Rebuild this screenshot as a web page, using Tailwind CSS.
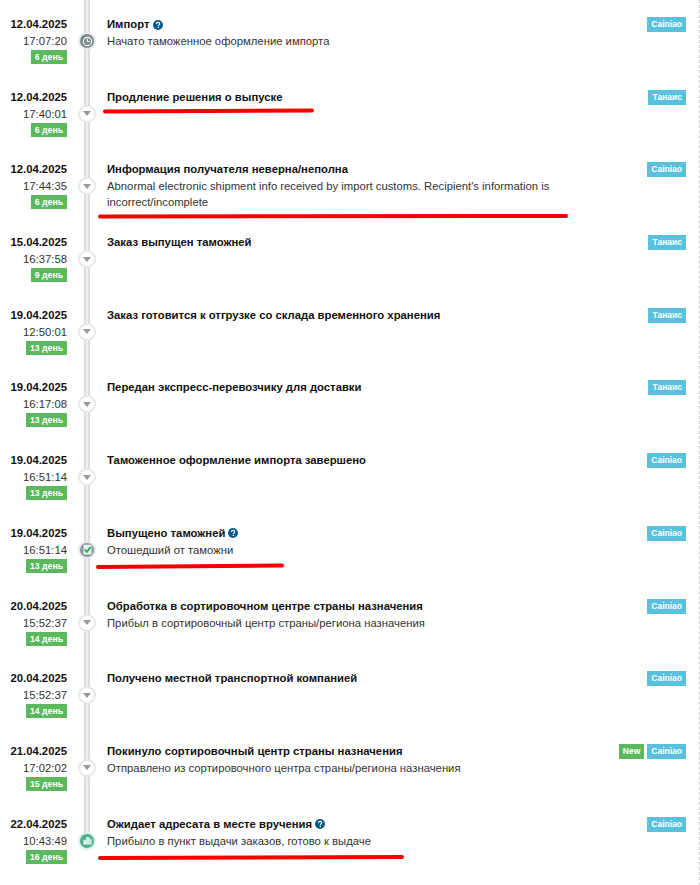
<!DOCTYPE html>
<html lang="en">
<head>
<meta charset="UTF-8">
<title>Tracking</title>
<script src="https://cdn.jsdelivr.net/npm/@tailwindcss/browser@4"></script>
</head>
<body class="bg-white">
<div class="relative w-[700px] h-[885px] overflow-hidden font-['Liberation_Sans',Arial,sans-serif] text-[11.3px] leading-[16px] text-[#333] border-r border-dashed border-[#ccc]">

  <!-- timeline rail -->
  <div class="absolute left-[84px] top-0 w-[6px] h-[840px] bg-[#eef0f2] border-x-2 border-x-[#d9dce0]"></div>

  <div class="pt-[16px]">

    <div class="flex h-[72.7px]">
      <div class="w-[67px] shrink-0 flex flex-col items-end">
        <div class="font-bold leading-[17px] text-[#111]">12.04.2025</div>
        <div>17:07:20</div>
        <div class="mt-[1px] h-[14px] px-[4px] bg-[#5cb85c] text-white font-bold text-[8.7px] leading-[14px]">6 день</div>
      </div>
      <div class="relative w-[40px] shrink-0">
        <div class="absolute left-[13px] top-[18px] w-[14px] h-[14px] rounded-full bg-[#7f8c8d] ring-2 ring-[#e6e8ea] flex items-center justify-center">
          <svg viewBox="0 0 16 16" class="w-[11px] h-[11px]" fill="none" stroke="#fff" stroke-width="1.5"><circle cx="8" cy="8" r="6"/><path d="M8 4.5V8h3"/></svg>
        </div>
      </div>
      <div class="flex-1 min-w-0">
        <div class="font-bold leading-[17px] text-[#111] flex items-center gap-[3px]">Импорт
          <svg viewBox="0 0 16 16" class="w-[10px] h-[10px]"><circle cx="8" cy="8" r="8" fill="#0b5a8f"/><path d="M5.4 6.2C5.5 4.6 6.6 3.8 8.1 3.8c1.5 0 2.6.9 2.6 2.2 0 1.9-2.1 1.9-2.1 3.6" fill="none" stroke="#fff" stroke-width="1.8"/><rect x="7.5" y="10.8" width="2.1" height="2" fill="#fff"/></svg>
        </div>
        <div>Начато таможенное оформление импорта</div>
      </div>
      <div class="w-[100px] shrink-0 pt-[1px] pr-[13px] flex justify-end items-start gap-[3px]"><span class="h-[15px] px-[4px] bg-[#5bc0de] text-white font-bold text-[8.5px] leading-[15px]">Cainiao</span></div>
    </div>

    <div class="flex h-[72.7px]">
      <div class="w-[67px] shrink-0 flex flex-col items-end">
        <div class="font-bold leading-[17px] text-[#111]">12.04.2025</div>
        <div>17:40:01</div>
        <div class="mt-[1px] h-[14px] px-[4px] bg-[#5cb85c] text-white font-bold text-[8.7px] leading-[14px]">6 день</div>
      </div>
      <div class="relative w-[40px] shrink-0">
        <div class="absolute left-[13px] top-[18px] w-[14px] h-[14px] rounded-full bg-white ring-2 ring-[#e6e8ea] flex items-center justify-center">
          <div class="w-0 h-0 border-x-[4px] border-x-transparent border-t-[5px] border-t-[#999]"></div>
        </div>
      </div>
      <div class="flex-1 min-w-0"><div class="font-bold leading-[17px] text-[#111]">Продление решения о выпуске</div></div>
      <div class="w-[100px] shrink-0 pt-[1px] pr-[13px] flex justify-end items-start gap-[3px]"><span class="h-[15px] px-[4px] bg-[#5bc0de] text-white font-bold text-[8.5px] leading-[15px]">Танаис</span></div>
    </div>

    <div class="flex h-[72.7px]">
      <div class="w-[67px] shrink-0 flex flex-col items-end">
        <div class="font-bold leading-[17px] text-[#111]">12.04.2025</div>
        <div>17:44:35</div>
        <div class="mt-[1px] h-[14px] px-[4px] bg-[#5cb85c] text-white font-bold text-[8.7px] leading-[14px]">6 день</div>
      </div>
      <div class="relative w-[40px] shrink-0">
        <div class="absolute left-[13px] top-[18px] w-[14px] h-[14px] rounded-full bg-white ring-2 ring-[#e6e8ea] flex items-center justify-center">
          <div class="w-0 h-0 border-x-[4px] border-x-transparent border-t-[5px] border-t-[#999]"></div>
        </div>
      </div>
      <div class="flex-1 min-w-0">
        <div class="font-bold leading-[17px] text-[#111]">Информация получателя неверна/неполна</div>
        <div>Abnormal electronic shipment info received by import customs. Recipient's information is incorrect/incomplete</div>
      </div>
      <div class="w-[100px] shrink-0 pt-[1px] pr-[13px] flex justify-end items-start gap-[3px]"><span class="h-[15px] px-[4px] bg-[#5bc0de] text-white font-bold text-[8.5px] leading-[15px]">Cainiao</span></div>
    </div>

    <div class="flex h-[72.7px]">
      <div class="w-[67px] shrink-0 flex flex-col items-end">
        <div class="font-bold leading-[17px] text-[#111]">15.04.2025</div>
        <div>16:37:58</div>
        <div class="mt-[1px] h-[14px] px-[4px] bg-[#5cb85c] text-white font-bold text-[8.7px] leading-[14px]">9 день</div>
      </div>
      <div class="relative w-[40px] shrink-0">
        <div class="absolute left-[13px] top-[18px] w-[14px] h-[14px] rounded-full bg-white ring-2 ring-[#e6e8ea] flex items-center justify-center">
          <div class="w-0 h-0 border-x-[4px] border-x-transparent border-t-[5px] border-t-[#999]"></div>
        </div>
      </div>
      <div class="flex-1 min-w-0"><div class="font-bold leading-[17px] text-[#111]">Заказ выпущен таможней</div></div>
      <div class="w-[100px] shrink-0 pt-[1px] pr-[13px] flex justify-end items-start gap-[3px]"><span class="h-[15px] px-[4px] bg-[#5bc0de] text-white font-bold text-[8.5px] leading-[15px]">Танаис</span></div>
    </div>

    <div class="flex h-[72.7px]">
      <div class="w-[67px] shrink-0 flex flex-col items-end">
        <div class="font-bold leading-[17px] text-[#111]">19.04.2025</div>
        <div>12:50:01</div>
        <div class="mt-[1px] h-[14px] px-[4px] bg-[#5cb85c] text-white font-bold text-[8.7px] leading-[14px]">13 день</div>
      </div>
      <div class="relative w-[40px] shrink-0">
        <div class="absolute left-[13px] top-[18px] w-[14px] h-[14px] rounded-full bg-white ring-2 ring-[#e6e8ea] flex items-center justify-center">
          <div class="w-0 h-0 border-x-[4px] border-x-transparent border-t-[5px] border-t-[#999]"></div>
        </div>
      </div>
      <div class="flex-1 min-w-0"><div class="font-bold leading-[17px] text-[#111]">Заказ готовится к отгрузке со склада временного хранения</div></div>
      <div class="w-[100px] shrink-0 pt-[1px] pr-[13px] flex justify-end items-start gap-[3px]"><span class="h-[15px] px-[4px] bg-[#5bc0de] text-white font-bold text-[8.5px] leading-[15px]">Танаис</span></div>
    </div>

    <div class="flex h-[72.7px]">
      <div class="w-[67px] shrink-0 flex flex-col items-end">
        <div class="font-bold leading-[17px] text-[#111]">19.04.2025</div>
        <div>16:17:08</div>
        <div class="mt-[1px] h-[14px] px-[4px] bg-[#5cb85c] text-white font-bold text-[8.7px] leading-[14px]">13 день</div>
      </div>
      <div class="relative w-[40px] shrink-0">
        <div class="absolute left-[13px] top-[18px] w-[14px] h-[14px] rounded-full bg-white ring-2 ring-[#e6e8ea] flex items-center justify-center">
          <div class="w-0 h-0 border-x-[4px] border-x-transparent border-t-[5px] border-t-[#999]"></div>
        </div>
      </div>
      <div class="flex-1 min-w-0"><div class="font-bold leading-[17px] text-[#111]">Передан экспресс-перевозчику для доставки</div></div>
      <div class="w-[100px] shrink-0 pt-[1px] pr-[13px] flex justify-end items-start gap-[3px]"><span class="h-[15px] px-[4px] bg-[#5bc0de] text-white font-bold text-[8.5px] leading-[15px]">Танаис</span></div>
    </div>

    <div class="flex h-[72.7px]">
      <div class="w-[67px] shrink-0 flex flex-col items-end">
        <div class="font-bold leading-[17px] text-[#111]">19.04.2025</div>
        <div>16:51:14</div>
        <div class="mt-[1px] h-[14px] px-[4px] bg-[#5cb85c] text-white font-bold text-[8.7px] leading-[14px]">13 день</div>
      </div>
      <div class="relative w-[40px] shrink-0">
        <div class="absolute left-[13px] top-[18px] w-[14px] h-[14px] rounded-full bg-white ring-2 ring-[#e6e8ea] flex items-center justify-center">
          <div class="w-0 h-0 border-x-[4px] border-x-transparent border-t-[5px] border-t-[#999]"></div>
        </div>
      </div>
      <div class="flex-1 min-w-0"><div class="font-bold leading-[17px] text-[#111]">Таможенное оформление импорта завершено</div></div>
      <div class="w-[100px] shrink-0 pt-[1px] pr-[13px] flex justify-end items-start gap-[3px]"><span class="h-[15px] px-[4px] bg-[#5bc0de] text-white font-bold text-[8.5px] leading-[15px]">Cainiao</span></div>
    </div>

    <div class="flex h-[72.7px]">
      <div class="w-[67px] shrink-0 flex flex-col items-end">
        <div class="font-bold leading-[17px] text-[#111]">19.04.2025</div>
        <div>16:51:14</div>
        <div class="mt-[1px] h-[14px] px-[4px] bg-[#5cb85c] text-white font-bold text-[8.7px] leading-[14px]">13 день</div>
      </div>
      <div class="relative w-[40px] shrink-0">
        <div class="absolute left-[13px] top-[18px] w-[14px] h-[14px] rounded-full bg-[#8a979c] ring-2 ring-[#e6e8ea] flex items-center justify-center">
          <svg viewBox="0 0 16 16" class="w-[13px] h-[13px]"><rect x="3" y="2" width="10" height="12" rx="1" fill="#e8ecee"/><path d="M4.5 8l2.5 3 5-6" fill="none" stroke="#22b14c" stroke-width="2.2"/></svg>
        </div>
      </div>
      <div class="flex-1 min-w-0">
        <div class="font-bold leading-[17px] text-[#111] flex items-center gap-[3px]">Выпущено таможней
          <svg viewBox="0 0 16 16" class="w-[10px] h-[10px]"><circle cx="8" cy="8" r="8" fill="#0b5a8f"/><path d="M5.4 6.2C5.5 4.6 6.6 3.8 8.1 3.8c1.5 0 2.6.9 2.6 2.2 0 1.9-2.1 1.9-2.1 3.6" fill="none" stroke="#fff" stroke-width="1.8"/><rect x="7.5" y="10.8" width="2.1" height="2" fill="#fff"/></svg>
        </div>
        <div>Отошедший от таможни</div>
      </div>
      <div class="w-[100px] shrink-0 pt-[1px] pr-[13px] flex justify-end items-start gap-[3px]"><span class="h-[15px] px-[4px] bg-[#5bc0de] text-white font-bold text-[8.5px] leading-[15px]">Cainiao</span></div>
    </div>

    <div class="flex h-[72.7px]">
      <div class="w-[67px] shrink-0 flex flex-col items-end">
        <div class="font-bold leading-[17px] text-[#111]">20.04.2025</div>
        <div>15:52:37</div>
        <div class="mt-[1px] h-[14px] px-[4px] bg-[#5cb85c] text-white font-bold text-[8.7px] leading-[14px]">14 день</div>
      </div>
      <div class="relative w-[40px] shrink-0">
        <div class="absolute left-[13px] top-[18px] w-[14px] h-[14px] rounded-full bg-white ring-2 ring-[#e6e8ea] flex items-center justify-center">
          <div class="w-0 h-0 border-x-[4px] border-x-transparent border-t-[5px] border-t-[#999]"></div>
        </div>
      </div>
      <div class="flex-1 min-w-0">
        <div class="font-bold leading-[17px] text-[#111]">Обработка в сортировочном центре страны назначения</div>
        <div>Прибыл в сортировочный центр страны/региона назначения</div>
      </div>
      <div class="w-[100px] shrink-0 pt-[1px] pr-[13px] flex justify-end items-start gap-[3px]"><span class="h-[15px] px-[4px] bg-[#5bc0de] text-white font-bold text-[8.5px] leading-[15px]">Cainiao</span></div>
    </div>

    <div class="flex h-[72.7px]">
      <div class="w-[67px] shrink-0 flex flex-col items-end">
        <div class="font-bold leading-[17px] text-[#111]">20.04.2025</div>
        <div>15:52:37</div>
        <div class="mt-[1px] h-[14px] px-[4px] bg-[#5cb85c] text-white font-bold text-[8.7px] leading-[14px]">14 день</div>
      </div>
      <div class="relative w-[40px] shrink-0">
        <div class="absolute left-[13px] top-[18px] w-[14px] h-[14px] rounded-full bg-white ring-2 ring-[#e6e8ea] flex items-center justify-center">
          <div class="w-0 h-0 border-x-[4px] border-x-transparent border-t-[5px] border-t-[#999]"></div>
        </div>
      </div>
      <div class="flex-1 min-w-0"><div class="font-bold leading-[17px] text-[#111]">Получено местной транспортной компанией</div></div>
      <div class="w-[100px] shrink-0 pt-[1px] pr-[13px] flex justify-end items-start gap-[3px]"><span class="h-[15px] px-[4px] bg-[#5bc0de] text-white font-bold text-[8.5px] leading-[15px]">Cainiao</span></div>
    </div>

    <div class="flex h-[72.7px]">
      <div class="w-[67px] shrink-0 flex flex-col items-end">
        <div class="font-bold leading-[17px] text-[#111]">21.04.2025</div>
        <div>17:02:02</div>
        <div class="mt-[1px] h-[14px] px-[4px] bg-[#5cb85c] text-white font-bold text-[8.7px] leading-[14px]">15 день</div>
      </div>
      <div class="relative w-[40px] shrink-0">
        <div class="absolute left-[13px] top-[18px] w-[14px] h-[14px] rounded-full bg-white ring-2 ring-[#e6e8ea] flex items-center justify-center">
          <div class="w-0 h-0 border-x-[4px] border-x-transparent border-t-[5px] border-t-[#999]"></div>
        </div>
      </div>
      <div class="flex-1 min-w-0">
        <div class="font-bold leading-[17px] text-[#111]">Покинуло сортировочный центр страны назначения</div>
        <div>Отправлено из сортировочного центра страны/региона назначения</div>
      </div>
      <div class="w-[100px] shrink-0 pt-[1px] pr-[13px] flex justify-end items-start gap-[3px]"><span class="h-[15px] px-[4px] bg-[#5cb85c] text-white font-bold text-[8.5px] leading-[15px]">New</span><span class="h-[15px] px-[4px] bg-[#5bc0de] text-white font-bold text-[8.5px] leading-[15px]">Cainiao</span></div>
    </div>

    <div class="flex h-[72.7px]">
      <div class="w-[67px] shrink-0 flex flex-col items-end">
        <div class="font-bold leading-[17px] text-[#111]">22.04.2025</div>
        <div>10:43:49</div>
        <div class="mt-[1px] h-[14px] px-[4px] bg-[#5cb85c] text-white font-bold text-[8.7px] leading-[14px]">16 день</div>
      </div>
      <div class="relative w-[40px] shrink-0">
        <div class="absolute left-[13px] top-[18px] w-[14px] h-[14px] rounded-full bg-[#4fb18c] ring-2 ring-[#dcefe8] flex items-center justify-center">
          <svg viewBox="0 0 16 16" class="w-[11px] h-[11px]" fill="#d9efe7"><rect x="2" y="7" width="4" height="7"/><rect x="6" y="3" width="5" height="11"/><rect x="11" y="6" width="3" height="8"/></svg>
        </div>
      </div>
      <div class="flex-1 min-w-0">
        <div class="font-bold leading-[17px] text-[#111] flex items-center gap-[3px]">Ожидает адресата в месте вручения
          <svg viewBox="0 0 16 16" class="w-[10px] h-[10px]"><circle cx="8" cy="8" r="8" fill="#0b5a8f"/><path d="M5.4 6.2C5.5 4.6 6.6 3.8 8.1 3.8c1.5 0 2.6.9 2.6 2.2 0 1.9-2.1 1.9-2.1 3.6" fill="none" stroke="#fff" stroke-width="1.8"/><rect x="7.5" y="10.8" width="2.1" height="2" fill="#fff"/></svg>
        </div>
        <div>Прибыло в пункт выдачи заказов, готово к выдаче</div>
      </div>
      <div class="w-[100px] shrink-0 pt-[1px] pr-[13px] flex justify-end items-start gap-[3px]"><span class="h-[15px] px-[4px] bg-[#5bc0de] text-white font-bold text-[8.5px] leading-[15px]">Cainiao</span></div>
    </div>

  </div>

  <!-- red marker strokes drawn over the screenshot -->
  <svg class="absolute inset-0 w-[700px] h-[885px] pointer-events-none" viewBox="0 0 700 885" fill="none" stroke="#f80000" stroke-width="4" stroke-linecap="round">
    <path d="M105 111.5L312 110.5"/>
    <path d="M100 216.5L566 216"/>
    <path d="M98 567L282 565.5"/>
    <path d="M100 858L402 857"/>
  </svg>
</div>
</body>
</html>
